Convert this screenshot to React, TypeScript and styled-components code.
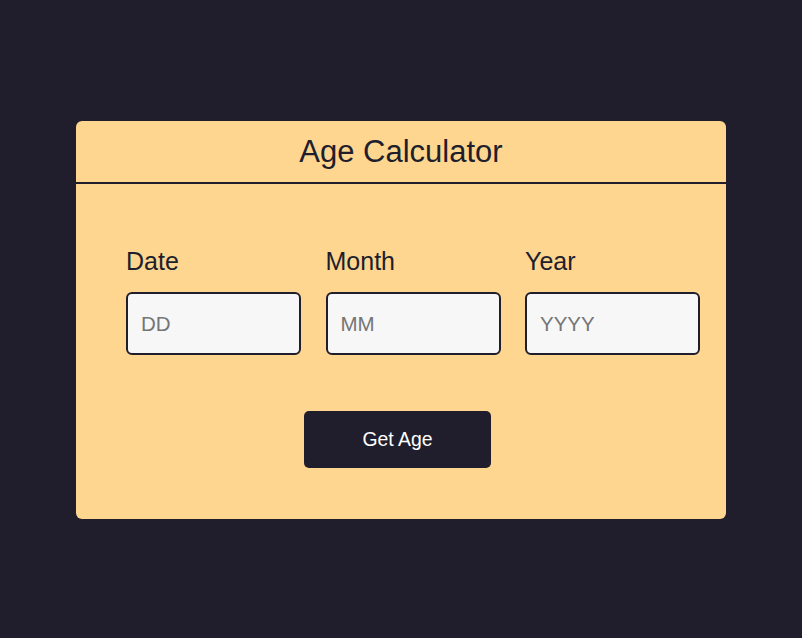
import React from 'react';
import styled, { createGlobalStyle } from 'styled-components';

const DARK = '#201e2c';
const SAND = '#ffd68f';

const GlobalStyle = createGlobalStyle`
    html, body {
        margin: 0;
        padding: 0;
        background: ${DARK};
        font-family: "Liberation Sans", Arial, sans-serif;
    }
`;

const Page = styled.div`
    display: flex;
    justify-content: center;
    align-items: flex-start;
    min-height: 100vh;
    padding-top: 121px;
    box-sizing: border-box;
`;

const Card = styled.div`
    width: 650px;
    height: 398px;
    background: ${SAND};
    border-radius: 6px;
    display: flex;
    flex-direction: column;
`;

const Header = styled.h1`
    margin: 0;
    height: 61px;
    display: flex;
    align-items: center;
    justify-content: center;
    border-bottom: 2px solid ${DARK};
    font-size: 31px;
    font-weight: 400;
    color: ${DARK};
`;

const Body = styled.div`
    display: flex;
    flex-direction: column;
    padding: 63px 0 0 50px;
`;

const Fields = styled.div`
    display: grid;
    grid-template-columns: repeat(3, 175px);
    column-gap: 24.5px;
`;

const Field = styled.label`
    display: flex;
    flex-direction: column;
    gap: 16px;
`;

const LabelText = styled.span`
    font-size: 25px;
    line-height: normal;
    color: ${DARK};
`;

const Input = styled.input`
    box-sizing: border-box;
    width: 175px;
    height: 63px;
    padding: 0 13px;
    border: 2px solid ${DARK};
    border-radius: 6px;
    background: #f7f7f7;
    font-family: inherit;
    font-size: 20.5px;
    color: ${DARK};
    outline: none;

    &::placeholder {
        color: #757575;
    }
`;

const ButtonRow = styled.div`
    display: flex;
    justify-content: flex-start;
    padding: 56px 0 0 178px;
`;

const Button = styled.button`
    width: 187px;
    height: 57px;
    border: none;
    border-radius: 5px;
    background: ${DARK};
    color: #ffffff;
    font-family: inherit;
    font-size: 19.4px;
    cursor: pointer;
`;

const fields = [
    { label: 'Date', placeholder: 'DD' },
    { label: 'Month', placeholder: 'MM' },
    { label: 'Year', placeholder: 'YYYY' },
];

const App = () => (
    <>
        <GlobalStyle />
        <Page>
            <Card>
                <Header>Age Calculator</Header>
                <Body>
                    <Fields>
                        {fields.map(f => (
                            <Field key={f.label}>
                                <LabelText>{f.label}</LabelText>
                                <Input type="text" placeholder={f.placeholder} />
                            </Field>
                        ))}
                    </Fields>
                    <ButtonRow>
                        <Button type="button">Get Age</Button>
                    </ButtonRow>
                </Body>
            </Card>
        </Page>
    </>
);

export default App;
